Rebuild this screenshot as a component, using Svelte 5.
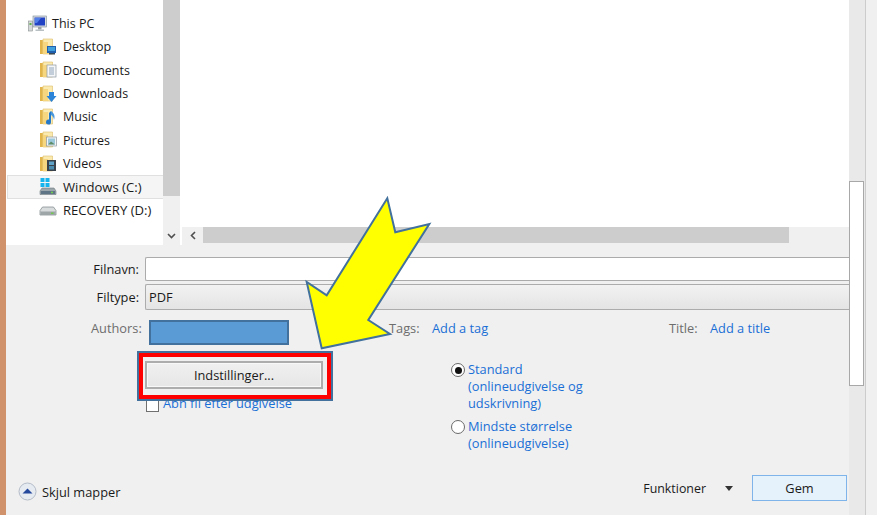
<script>
  const libs = [
    { name: 'Desktop', k: 'desktop' },
    { name: 'Documents', k: 'doc' },
    { name: 'Downloads', k: 'down' },
    { name: 'Music', k: 'music' },
    { name: 'Pictures', k: 'pic' },
    { name: 'Videos', k: 'vid' }
  ];
</script>

<div class="page">
  <div class="strip"></div>
  <div class="dialog">
    <div class="browser">
      <div class="nav">
        <div class="row pc">
          <svg class="pcicon" width="19" height="18" viewBox="0 0 19 18">
            <rect x="0.5" y="6" width="4" height="10" fill="#d4d8d8" stroke="#8a9090" stroke-width=".6"/>
            <rect x="1.5" y="8" width="2" height="2" fill="#5fb04a"/>
            <rect x="5" y="1" width="13.5" height="11" fill="#d8dde0" stroke="#7c8a94" stroke-width=".6"/>
            <rect x="6.5" y="2.5" width="10.5" height="8" fill="#2243c4"/>
            <path d="M7 3h6l-4 5H7z" fill="#4f7ee8"/>
            <rect x="10" y="12" width="3.5" height="2.5" fill="#9aa2a8"/>
            <rect x="7.5" y="14.5" width="8.5" height="1.5" fill="#b9c0c4"/>
          </svg>
          <span>This PC</span>
        </div>
        {#each libs as l}
          <div class="row lib">
            <svg class="icon" width="18" height="18" viewBox="0 0 18 18">
              <path d="M1 2h11v14H1z" fill="#f0cf72"/>
              <path d="M1 2h2.500v14H1z" fill="#e2b44c"/>
              <path d="M4 1h9.500v15H4z" fill="#fbeab0" stroke="#dcbc68" stroke-width=".6"/>
              <path d="M4 4h5v12H4z" fill="#f6d67e"/>
              {#if l.k === 'desktop'}
                <rect x="8" y="8" width="9" height="7" fill="#1f5fae"/>
                <rect x="9" y="9" width="7" height="4" fill="#3f9fdc"/>
                <rect x="10" y="15" width="6" height="1.500" fill="#3a4a58"/>
              {:else if l.k === 'doc'}
                <rect x="8" y="4" width="9" height="12" fill="#f4f6f8" stroke="#8d98a0" stroke-width=".7"/>
                <path d="M10 7h5M10 9h5M10 11h5M10 13h5" stroke="#7a92ac" stroke-width=".8"/>
              {:else if l.k === 'down'}
                <path d="M10 7h5v4h2.500l-5 6-5-6H10z" fill="#2b84d8"/>
              {:else if l.k === 'music'}
                <path d="M12 3v11a2.500 2.500 0 1 1-2-2.400V5z" fill="#2678c8"/>
                <path d="M12 3c3 2 4.500 5 3 9-.3-3-1.500-4-3-5z" fill="#4a98dc"/>
              {:else if l.k === 'pic'}
                <rect x="7.500" y="6" width="10" height="9" fill="#f2f5f6" stroke="#8d98a0" stroke-width=".7"/>
                <rect x="9" y="7.500" width="7" height="6" fill="#9cc8dc"/>
                <path d="M9 13.500l3-3 4 3z" fill="#5e8c68"/>
              {:else}
                <rect x="8" y="5" width="9" height="11" fill="#39424a"/>
                <rect x="10" y="6.500" width="5" height="3.500" fill="#5fa4c8"/>
                <rect x="10" y="11" width="5" height="3.500" fill="#4a8cb0"/>
              {/if}
            </svg>
            <span>{l.name}</span>
          </div>
        {/each}
        <div class="row lib sel">
          <svg class="icon" width="18" height="18" viewBox="0 0 18 18">
            <rect x="1.500" y="0" width="4" height="4" fill="#15b4ee"/>
            <rect x="6.500" y="0" width="4" height="4" fill="#15b4ee"/>
            <rect x="1.500" y="5" width="4" height="4" fill="#15b4ee"/>
            <rect x="6.500" y="5" width="4" height="4" fill="#15b4ee"/>
            <path d="M3 10h12l2 3v3.500H1V13z" fill="#9aa6ac" stroke="#6e7a80" stroke-width=".6"/>
            <rect x="2" y="13" width="14" height="3" fill="#5f7484"/>
            <rect x="12" y="13.700" width="2" height="1.500" fill="#6fd04e"/>
          </svg>
          <span class="wide">Windows (C:)</span>
        </div>
        <div class="row lib">
          <svg class="icon" width="18" height="18" viewBox="0 0 18 18">
            <path d="M3.500 6h11l2.500 3.500V14H1V9.500z" fill="#d8dcdc" stroke="#7c8486" stroke-width=".7"/>
            <rect x="1.500" y="10.500" width="15" height="3.500" fill="#9ea6a8"/>
            <rect x="12" y="11.500" width="2.500" height="1.500" fill="#72c850"/>
          </svg>
          <span class="wide">RECOVERY (D:)</span>
        </div>
      </div>
      <div class="navscroll">
        <div class="navthumb"></div>
        <svg class="chev" width="9" height="6" viewBox="0 0 9 6"><path d="M1 1l3.500 3.500L8 1" fill="none" stroke="#505050" stroke-width="1.600"/></svg>
      </div>
      <div class="sep"></div>
      <div class="content">
        <div class="files"></div>
        <div class="hscroll">
          <div class="larrow">
            <svg width="6" height="9" viewBox="0 0 6 9"><path d="M5 1L1.500 4.500 5 8" fill="none" stroke="#505050" stroke-width="1.600"/></svg>
          </div>
          <div class="hthumb"></div>
        </div>
      </div>
    </div>

    <div class="form">
      <div class="field name">
        <span class="flabel">Filnavn:</span>
        <div class="input"></div>
      </div>
      <div class="field type">
        <span class="flabel">Filtype:</span>
        <div class="select">PDF</div>
      </div>
      <div class="meta">
        <span class="mlabel authors">Authors:</span>
        <div class="authorbox"></div>
        <span class="mlabel tags">Tags:</span>
        <span class="link addtag">Add a tag</span>
        <span class="mlabel title">Title:</span>
        <span class="link">Add a title</span>
      </div>
      <div class="options">
        <div class="optleft">
          <div class="outline">
            <button class="settings">Indstillinger...</button>
          </div>
          <div class="check"><span class="box"></span><span class="link cap">Åbn fil efter udgivelse</span></div>
        </div>
        <div class="radios">
          <div class="radio">
            <span class="dot on"></span>
            <span class="link">Standard<br />(onlineudgivelse og<br />udskrivning)</span>
          </div>
          <div class="radio second">
            <span class="dot"></span>
            <span class="link">Mindste størrelse<br />(onlineudgivelse)</span>
          </div>
        </div>
      </div>
      <div class="footer">
        <div class="hide">
          <svg width="19" height="19" viewBox="0 0 19 19">
            <circle cx="9.500" cy="9.500" r="8.500" fill="#e6ebf2" stroke="#b4bcc8"/>
            <path d="M4.500 11.500L9.500 6.500l5 5z" fill="#23489c"/>
          </svg>
          <span class="hidetext">Skjul mapper</span>
        </div>
        <div class="actions">
          <span class="func">Funktioner</span>
          <span class="tri"></span>
          <button class="gem">Gem</button>
        </div>
      </div>
    </div>
  </div>
  <div class="vscroll"><div class="vthumb"></div></div>
  <div class="rest"></div>

  <svg class="arrow" width="877" height="515" viewBox="0 0 877 515">
    <polygon points="321.700,348.300 306.700,282 326.700,295.300 387.300,198.300 395.300,232.300 429.300,224 368.300,320 390,334" fill="#ffff00" stroke="#41719c" stroke-width="2"/>
  </svg>
</div>

<style>
  :global(body) {
    margin: 0;
  }
  .page {
    position: relative;
    display: flex;
    width: 877px;
    height: 515px;
    overflow: hidden;
    background: #f0f0f0;
    font-family: "Open Sans", "Noto Sans", sans-serif;
    font-size: 12.800px;
    color: #1a1a1a;
  }
  .strip {
    width: 6px;
    background: #d0926a;
  }
  .dialog {
    width: 843px;
    display: flex;
    flex-direction: column;
  }
  .browser {
    height: 245px;
    display: flex;
    background: #fff;
  }
  .nav {
    width: 157px;
    padding-top: 12px;
    box-sizing: border-box;
    font-size: 12.500px;
  }
  .wide {
    font-size: 13.100px;
  }
  .row {
    height: 23.330px;
    display: flex;
    align-items: center;
    box-sizing: border-box;
    white-space: nowrap;
  }
  .pc {
    padding-left: 22px;
    gap: 5px;
  }
  .lib {
    padding-left: 33px;
    gap: 6px;
  }
  .sel {
    margin-left: 1px;
    margin-right: -4px;
    padding-left: 31px;
    background: #f5f5f5;
    border: 1px solid #e0e0e0;
  }
  .navscroll {
    width: 17px;
    background: #f0f0f0;
    display: flex;
    flex-direction: column;
    align-items: center;
  }
  .navthumb {
    width: 100%;
    height: 196px;
    background: #cdcdcd;
  }
  .chev {
    margin-top: 37px;
  }
  .sep {
    width: 2px;
  }
  .content {
    flex: 1;
    display: flex;
    flex-direction: column;
  }
  .files {
    height: 227px;
  }
  .hscroll {
    height: 18px;
    background: #f0f0f0;
    display: flex;
    padding-bottom: 2px;
    box-sizing: border-box;
  }
  .larrow {
    width: 21px;
    display: flex;
    align-items: center;
    justify-content: center;
  }
  .hthumb {
    width: 586px;
    background: #cdcdcd;
  }
  .form {
    flex: 1;
    display: flex;
    flex-direction: column;
  }
  .field {
    display: flex;
    align-items: center;
  }
  .name {
    margin-top: 12px;
    height: 24px;
  }
  .type {
    margin-top: 3px;
    height: 26px;
  }
  .flabel {
    width: 133px;
    text-align: right;
    margin-right: 6px;
  }
  .input {
    flex: 1;
    height: 100%;
    box-sizing: border-box;
    background: #fff;
    border: 1px solid #ababab;
    border-right: 0;
    border-radius: 2px 0 0 2px;
  }
  .select {
    flex: 1;
    height: 100%;
    box-sizing: border-box;
    padding-left: 3px;
    line-height: 24px;
    background: linear-gradient(#f2f2f2, #e4e4e4);
    border: 1px solid #acacac;
    border-right: 0;
    border-radius: 2px 0 0 2px;
  }
  .meta {
    margin-top: 10px;
    height: 25px;
    display: flex;
    align-items: flex-start;
    line-height: 16px;
    box-sizing: border-box;
  }
  .mlabel {
    color: #6d6d6d;
  }
  .authors {
    margin-left: 85px;
    width: 58px;
  }
  .authorbox {
    width: 140px;
    height: 25px;
    box-sizing: border-box;
    background: #5b9bd5;
    border: 2px solid #41719c;
    margin-right: 100px;
  }
  .tags {
    width: 43px;
  }
  .addtag {
    width: 237px;
  }
  .title {
    width: 41px;
  }
  .link {
    color: #1a6fd6;
  }
  .options {
    display: flex;
    height: 130px;
  }
  .optleft {
    width: 445px;
    padding-left: 131px;
    padding-top: 6px;
    box-sizing: border-box;
  }
  .outline {
    width: 196px;
    height: 50px;
    box-sizing: border-box;
    border: 2px solid #41719c;
    display: flex;
    position: relative;
    z-index: 1;
    background: #f0f0f0;
  }
  .outline::before {
    content: "";
    position: absolute;
    inset: 0;
    border: 4px solid #ff0000;
  }
  .settings {
    margin: 8px 0 0 6px;
    width: 178px;
    height: 28px;
    padding: 0;
    font: inherit;
    color: #1a1a1a;
    background: linear-gradient(#f0f0f0, #e6e6e6);
    border: 2px solid #adadad;
    outline: 1px solid #f8f8f8;
    outline-offset: -3px;
  }
  .check {
    display: flex;
    align-items: center;
    gap: 4px;
    margin: -2px 0 0 9px;
    line-height: 12px;
    height: 12px;
  }
  .cap {
    margin-bottom: 4px;
  }
  .box {
    width: 11px;
    height: 11px;
    background: #fff;
    border: 1px solid #707070;
    flex: none;
  }
  .radios {
    padding-top: 16px;
    line-height: 17px;
  }
  .radio {
    display: flex;
    gap: 3px;
  }
  .second {
    margin-top: 6px;
  }
  .dot {
    width: 12px;
    height: 12px;
    margin-top: 2px;
    border: 1px solid #6a6a6a;
    border-radius: 50%;
    background: #fff;
    flex: none;
    display: flex;
    align-items: center;
    justify-content: center;
  }
  .dot.on::after {
    content: "";
    width: 7px;
    height: 7px;
    border-radius: 50%;
    background: #111;
  }
  .footer {
    flex: 1;
    display: flex;
    justify-content: space-between;
    align-items: flex-start;
  }
  .hide {
    margin: 0 0 0 12px;
    padding-top: 6px;
    display: flex;
    align-items: center;
    gap: 5px;
  }
  .hidetext {
    padding-top: 2px;
  }
  .actions {
    display: flex;
    align-items: center;
    margin-right: 2px;
    height: 26px;
  }
  .func {
    font-size: 12.400px;
  }
  .tri {
    width: 0;
    height: 0;
    border-left: 4.500px solid transparent;
    border-right: 4.500px solid transparent;
    border-top: 5px solid #333;
    margin: 0 19px 0 19px;
  }
  .gem {
    width: 95px;
    height: 26px;
    padding: 0;
    font: inherit;
    color: #1a1a1a;
    background: #e5f1fb;
    border: 1px solid #7eb4ea;
  }
  .vscroll {
    width: 16px;
    background: #e9e9e9;
    border-right: 1px solid #cccccc;
    box-sizing: content-box;
  }
  .vthumb {
    margin-top: 181px;
    width: 15px;
    height: 205px;
    box-sizing: border-box;
    background: #fff;
    border: 1px solid #a8a8a8;
  }
  .rest {
    flex: 1;
  }
  .arrow {
    position: absolute;
    left: 0;
    top: 0;
    z-index: 2;
    pointer-events: none;
  }
</style>
